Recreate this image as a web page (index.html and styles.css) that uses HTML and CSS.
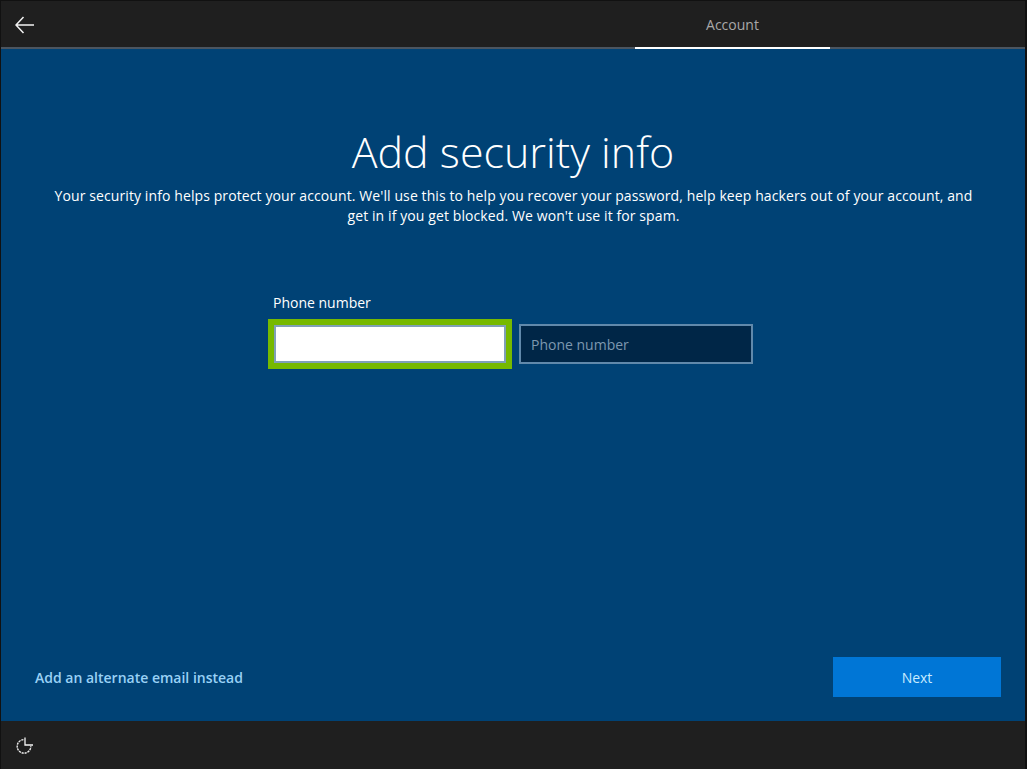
FILE: index.html
```html
<!DOCTYPE html>
<html lang="en">
<head>
    <meta charset="UTF-8">
    <meta name="viewport" content="width=device-width, initial-scale=1.0">
    <title>Add security info</title>
    <link rel="stylesheet" href="styles.css">
</head>
<body>
    <div class="screen">
        <div class="top-bar">
            <button class="back-btn" aria-label="Back">
                <svg width="19" height="18" viewBox="0 0 19 18"><path d="M8.5 1 L1 9 L8.5 17 M1 9 H19" fill="none" stroke="#f2f2f2" stroke-width="1.5"/></svg>
            </button>
            <div class="tab">Account</div>
        </div>

        <div class="content">
            <h1 class="title">Add security info</h1>
            <p class="intro">Your security info helps protect your account. We'll use this to help you recover your password, help keep hackers out of your account, and get in if you get blocked. We won't use it for spam.</p>

            <div class="phone-form">
                <label class="field-label">Phone number</label>
                <div class="field-row">
                    <div class="focus-ring"><input class="code-input" type="text"></div>
                    <input class="phone-input" type="text" placeholder="Phone number">
                </div>
            </div>

            <div class="actions">
                <a class="alt-link" href="#">Add an alternate email instead</a>
                <button class="next-btn">Next</button>
            </div>
        </div>

        <div class="bottom-bar">
            <svg width="18" height="18" viewBox="0 0 18 18"><path d="M7.4 3.6 A6.8 6.8 0 1 0 14.8 10.2" fill="none" stroke="#f0f0f0" stroke-width="1.4" stroke-dasharray="2.2 0.8"/><path d="M9 1.5 V9 H17" fill="none" stroke="#f5f5f5" stroke-width="1.3"/></svg>
        </div>
    </div>
</body>
</html>
```

FILE: styles.css
```css
html, body {
    margin: 0;
    padding: 0;
    height: 100%;
}
body {
    font-family: "Open Sans", "Noto Sans", Arial, sans-serif;
    background-color: #111;
    overflow: hidden;
}
.screen {
    display: flex;
    flex-direction: column;
    width: 1024px;
    height: 768px;
    margin: 1px 2px 0 1px;
    background-color: #004275;
    color: white;
}
.top-bar {
    display: flex;
    justify-content: space-between;
    height: 46px;
    background-color: #1f1f1f;
    border-bottom: 2px solid #4b5560;
}
.back-btn {
    background: none;
    border: none;
    padding: 0;
    margin: 15px 0 0 14px;
    width: 19px;
    height: 18px;
    line-height: 0;
}
.tab {
    width: 195px;
    margin-right: 195px;
    text-align: center;
    font-size: 14px;
    line-height: 48px;
    height: 46px;
    color: #a8a8a8;
    border-bottom: 2px solid white;
}
.content {
    flex: 1;
    display: flex;
    flex-direction: column;
    padding: 0 24px 0 34px;
    min-height: 0;
}
.title {
    font-size: 43px;
    font-weight: 300;
    text-align: center;
    margin: 73px 0 0 -34px;
    width: 1024px;
    line-height: 60px;
}
.intro {
    font-size: 14px;
    letter-spacing: 0.1px;
    line-height: 20px;
    text-align: center;
    margin: 4px 0 0 16px;
    width: 925px;
}
.phone-form {
    margin: 67px 0 0 238px;
}
.field-label {
    display: block;
    font-size: 14px;
    line-height: 20px;
    margin-bottom: 6px;
}
.field-row {
    display: flex;
    align-items: center;
    gap: 7px;
    margin-left: -5px;
}
.focus-ring {
    width: 232px;
    height: 38px;
    border: 6px solid #76b900;
    background-color: #80a0b8;
    line-height: 0;
}
.code-input {
    box-sizing: border-box;
    width: 228px;
    height: 34px;
    margin: 2px;
    border: none;
    background-color: white;
    outline: none;
}
.phone-input {
    box-sizing: border-box;
    width: 234px;
    height: 40px;
    padding: 0 10px;
    border: 2px solid #6189ab;
    background-color: #002647;
    color: white;
    font-family: inherit;
    font-size: 14px;
    outline: none;
}
.phone-input::placeholder {
    color: #7d98b0;
    opacity: 1;
}
.actions {
    margin-top: auto;
    margin-bottom: 24px;
    display: flex;
    justify-content: space-between;
    align-items: center;
}
.alt-link {
    color: #99d1f5;
    font-size: 14px;
    font-weight: 600;
    text-decoration: none;
}
.next-btn {
    width: 168px;
    height: 40px;
    border: none;
    background-color: #0076d6;
    color: #c8ecff;
    font-family: inherit;
    font-size: 14px;
}
.bottom-bar {
    height: 48px;
    background-color: #1f1f1f;
    display: flex;
    align-items: center;
    padding-left: 15px;
}
```
